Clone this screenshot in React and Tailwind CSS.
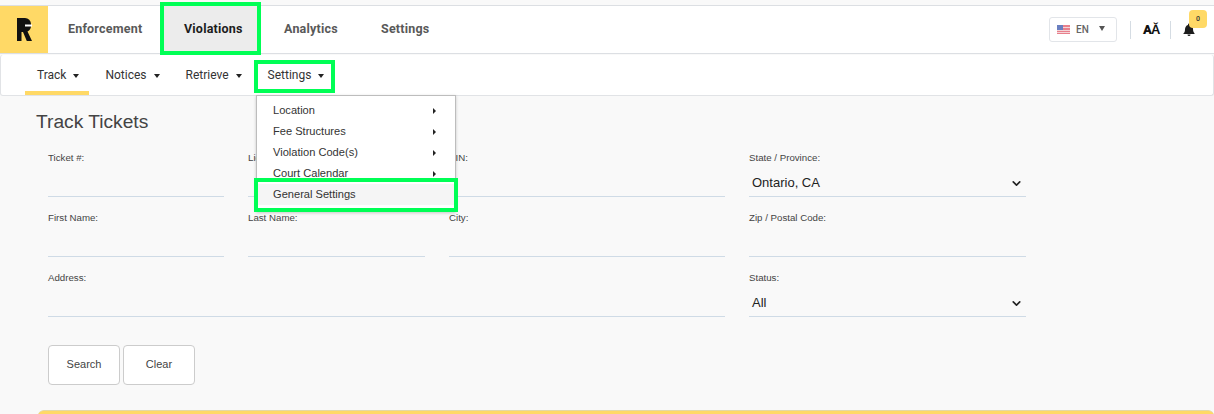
import React from 'react';
import { ChevronDown } from 'lucide-react';

const NAV_FONT = "font-['Roboto',sans-serif]";

const subItems = [
  { label: 'Track', active: true },
  { label: 'Notices' },
  { label: 'Retrieve' },
  { label: 'Settings' },
];

const menuItems = ['Location', 'Fee Structures', 'Violation Code(s)', 'Court Calendar'];

function Caret() {
  return <span className="ml-[7px] mt-[2px] inline-block border-x-[3.5px] border-t-[4px] border-x-transparent border-t-[#222]" />;
}

function Field({ label, className = '' }) {
  return (
    <div className={`h-[60px] ${className}`}>
      <div className="h-[46px] border-b border-[#cfdbe6] text-[9.7px] leading-[14px] text-[#444]">{label}</div>
    </div>
  );
}

function SelectField({ label, value }) {
  return (
    <div className="h-[60px]">
      <div className="h-[46px] border-b border-[#cfdbe6]">
        <div className="text-[9.7px] leading-[14px] text-[#444]">{label}</div>
        <div className="mt-[8px] flex items-center justify-between px-[3px] text-[13px] leading-[20px] text-[#222]">
          {value}
          <ChevronDown size={13} strokeWidth={3} className="text-[#222]" />
        </div>
      </div>
    </div>
  );
}

function Flag() {
  return (
    <svg width="13" height="9" viewBox="0 0 13 9">
      <rect width="13" height="9" fill="#e8808c" />
      <rect y="2" width="13" height="1" fill="#f4d5d8" />
      <rect y="5" width="13" height="1" fill="#f4d5d8" />
      <rect y="7" width="13" height="1" fill="#f4d5d8" />
      <rect width="6" height="5" fill="#6a7fc0" />
    </svg>
  );
}

function Bell() {
  return (
    <svg width="12" height="13" viewBox="0 0 12 13" fill="#1c1c1c">
      <path d="M6 0.5a1 1 0 0 1 1 1v.4c1.9.4 3 2 3 3.9 0 2.4.6 3.4 1.5 4.4v.8H.5v-.8C1.4 9.7 2 8.7 2 6.3c0-2 1.1-3.9 3-4.4v-.4a1 1 0 0 1 1-1z" />
      <path d="M4.5 11.5h3a1.5 1.5 0 0 1-3 0z" />
    </svg>
  );
}

export default function App() {
  return (
    <div className="relative h-[414px] w-[1214px] overflow-hidden bg-[#f9f9f9] font-['Liberation_Sans',Arial,sans-serif]">
      {/* top bar */}
      <div className="mt-[5px] flex h-[49px] items-stretch border-y border-[#dcdfe3] bg-white">
        <div className="flex w-[48px] items-center justify-center bg-[#ffd966]">
          <svg width="15" height="23" viewBox="0 0 15 23" fill="#111">
            <path d="M0 0h8a6 6 0 0 1 6 6v2a6 6 0 0 1-3.5 5.4L15 23H9.8L6 14H4.5v9H0z" />
            <rect x="8" y="6.5" width="7" height="2" fill="#fff" />
          </svg>
        </div>
        <nav className={`flex items-center text-[12.5px] font-bold tracking-[0.2px] text-[#595959] ${NAV_FONT}`}>
          <span className="ml-[20px] w-[74px]">Enforcement</span>
          <span className="ml-[22px] flex h-full w-[93px] items-center bg-[#ececec] pl-[20px] text-[#1c1c1c]">Violations</span>
          <span className="ml-[27px] w-[55px]">Analytics</span>
          <span className="ml-[42px]">Settings</span>
        </nav>
        <div className="ml-auto flex items-center pr-[19px]">
          <div className={`flex h-[25px] w-[68px] items-center rounded-[3px] border border-[#e2e5e9] pl-[7px] text-[10px] font-medium text-[#666] ${NAV_FONT}`}>
            <Flag />
            <span className="ml-[6px]">EN</span>
            <span className="ml-[10px] mb-[3px] inline-block border-x-[3.5px] border-t-[5px] border-x-transparent border-t-[#555]" />
          </div>
          <span className="ml-[13px] h-[18px] w-px bg-[#d5dce3]" />
          <span className={`ml-[12px] w-[16px] text-[13px] font-black leading-none tracking-[-0.8px] text-[#111] ${NAV_FONT}`}>AǍ</span>
          <span className="ml-[11px] h-[18px] w-px bg-[#d5dce3]" />
          <span className="relative ml-[12px] flex"><Bell /></span>
        </div>
      </div>

      {/* notification count */}
      <span className="absolute left-[1189px] top-[10px] flex h-[18px] w-[18px] items-center justify-center rounded-[4px] bg-[#ffd966] font-['Roboto',sans-serif] text-[7px] font-medium text-[#333]">0</span>

      {/* sub nav */}
      <div className={`mt-px flex h-[41px] items-stretch gap-[4px] rounded-[3px] border border-t-0 border-[#e1e3e6] bg-white pl-[24px] text-[12px] text-[#333] ${NAV_FONT}`}>
        {subItems.map((item) => (
          <div
            key={item.label}
            className={`flex items-center border-b-[4px] pl-[12px] pr-[10px] pt-[4px] ${item.active ? 'border-[#ffd966]' : 'border-transparent'}`}
          >
            {item.label}
            <Caret />
          </div>
        ))}
      </div>

      {/* form */}
      <main className="pl-[36px]">
        <h1 className="mt-[14px] text-[19.2px] leading-[24px] text-[#444]">Track Tickets</h1>
        <div className="ml-[12px] mt-[17px] grid w-[978px] grid-cols-[176px_177px_276px_277px] gap-x-[24px]">
          <Field label="Ticket #:" />
          <Field label="License Plate:" />
          <Field label="VIN:" />
          <SelectField label="State / Province:" value="Ontario, CA" />
          <Field label="First Name:" />
          <Field label="Last Name:" />
          <Field label="City:" />
          <Field label="Zip / Postal Code:" />
          <Field label="Address:" className="col-span-3" />
          <SelectField label="Status:" value="All" />
        </div>
        <div className="ml-[12px] mt-[14px] flex gap-[3px]">
          <button className="h-[40px] w-[72px] rounded-[4px] border border-[#ccc] bg-white pb-[1px] text-[11px] text-[#444]">Search</button>
          <button className="h-[40px] w-[72px] rounded-[4px] border border-[#ccc] bg-white pb-[1px] text-[11px] text-[#444]">Clear</button>
        </div>
        <div className="ml-[2px] mt-[25px] h-[8px] rounded-t-[6px] border-t border-[#e3d9a8] bg-[#ffd966]" />
      </main>

      {/* open settings menu */}
      <div className="absolute left-[256px] top-[95px] w-[200px] border border-[#bdbdbd] bg-white pb-[6px] pt-[4px] text-[11.1px] text-[#333] shadow-[0_1px_3px_rgba(0,0,0,0.2)]">
        {menuItems.map((label) => (
          <div key={label} className="flex h-[21px] items-center justify-between pl-[16px] pr-[19px]">
            {label}
            <span className="inline-block border-y-[3px] border-l-[3.5px] border-y-transparent border-l-[#222]" />
          </div>
        ))}
        <div className="flex h-[21px] items-center bg-[#f5f5f5] pl-[16px]">General Settings</div>
      </div>

      {/* green callouts */}
      <div className="absolute left-[160px] top-[2px] h-[53px] w-[101px] border-[4px] border-[#00ff55]" />
      <div className="absolute left-[254px] top-[60px] h-[33px] w-[81px] border-[4px] border-[#00ff55]" />
      <div className="absolute left-[254px] top-[178px] h-[34px] w-[204px] border-[4px] border-[#00ff55]" />
    </div>
  );
}
